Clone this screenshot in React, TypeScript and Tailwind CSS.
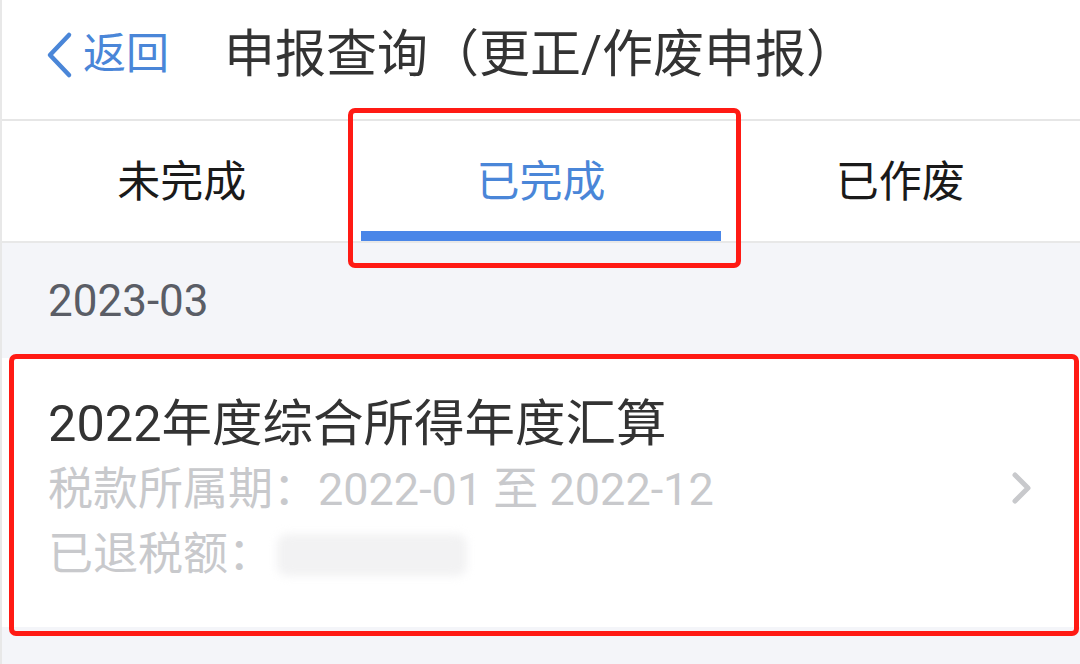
const tabs = ["未完成", "已完成", "已作废"];

export default function App() {
  const active = 1;

  return (
    <div
      className="relative w-[1080px] h-[664px] overflow-hidden bg-[#f4f5f9] border-l-2 border-[#e8e8e8]"
      style={{ fontFamily: "Roboto, 'Noto Sans CJK SC', sans-serif" }}
    >
      {/* header */}
      <div className="h-[121px] bg-white border-b-2 border-[#e6e6e6] flex items-center pb-[10px]">
        <div className="flex items-center pl-[42px] text-[#4a86d8]">
          <svg width="30" height="48" viewBox="0 0 30 48" fill="none">
            <path d="M25 4 L6 24 L25 44" stroke="currentColor" strokeWidth="4.5" strokeLinecap="round" strokeLinejoin="round" />
          </svg>
          <span className="ml-[9px] text-[43px] leading-none">返回</span>
        </div>
        <h1 className="ml-[55px] text-[51px] leading-none text-[#333333]">申报查询（更正/作废申报）</h1>
      </div>

      {/* tabs */}
      <div className="h-[122px] bg-white border-b-2 border-[#e8e8e8] flex">
        {tabs.map((t, i) => (
          <div key={t} className="flex-1 flex flex-col">
            <div
              className={
                "flex-1 flex items-center justify-center pt-[12px] text-[43px] leading-none " +
                (i === active ? "text-[#4a86d8]" : "text-[#1a1a1a]")
              }
            >
              {t}
            </div>
            <div className={"h-[10px] " + (i === active ? "bg-[#4a86e8]" : "bg-transparent")} />
          </div>
        ))}
      </div>

      {/* month */}
      <div className="h-[115px] px-[46px] flex items-center text-[44px] leading-none text-[#5a5d66]">2023-03</div>

      {/* record card */}
      <div className="h-[269px] bg-white flex items-center pl-[46px] pr-[46px] pt-[17px] pb-[23px]">
        <div className="flex-1">
          <div className="h-[65px] flex items-center text-[50.5px] leading-none text-[#333333]">2022年度综合所得年度汇算</div>
          <div className="h-[65px] flex items-center text-[45px] leading-none text-[#c8c9cc]">税款所属期：2022-01 至 2022-12</div>
          <div className="h-[65px] flex items-center text-[45px] leading-none text-[#c8c9cc]">
            已退税额：
            <div className="ml-[4px] w-[190px] h-[42px] rounded-[10px] bg-[#f2f2f3] blur-[4px]" />
          </div>
        </div>
        <svg className="mt-[-4px] text-[#c8c9cc]" width="24" height="34" viewBox="0 0 24 34" fill="none">
          <path d="M5 4 L18 17 L5 30" stroke="currentColor" strokeWidth="5" strokeLinecap="round" strokeLinejoin="round" />
        </svg>
      </div>

      {/* annotation boxes */}
      <div className="absolute left-[346px] top-[108px] w-[393px] h-[160px] border-[5px] border-[#ff1a14] rounded-[7px]" />
      <div className="absolute left-[7px] top-[354px] w-[1070px] h-[282px] border-[5px] border-[#ff1a14] rounded-[7px]" />
    </div>
  );
}
